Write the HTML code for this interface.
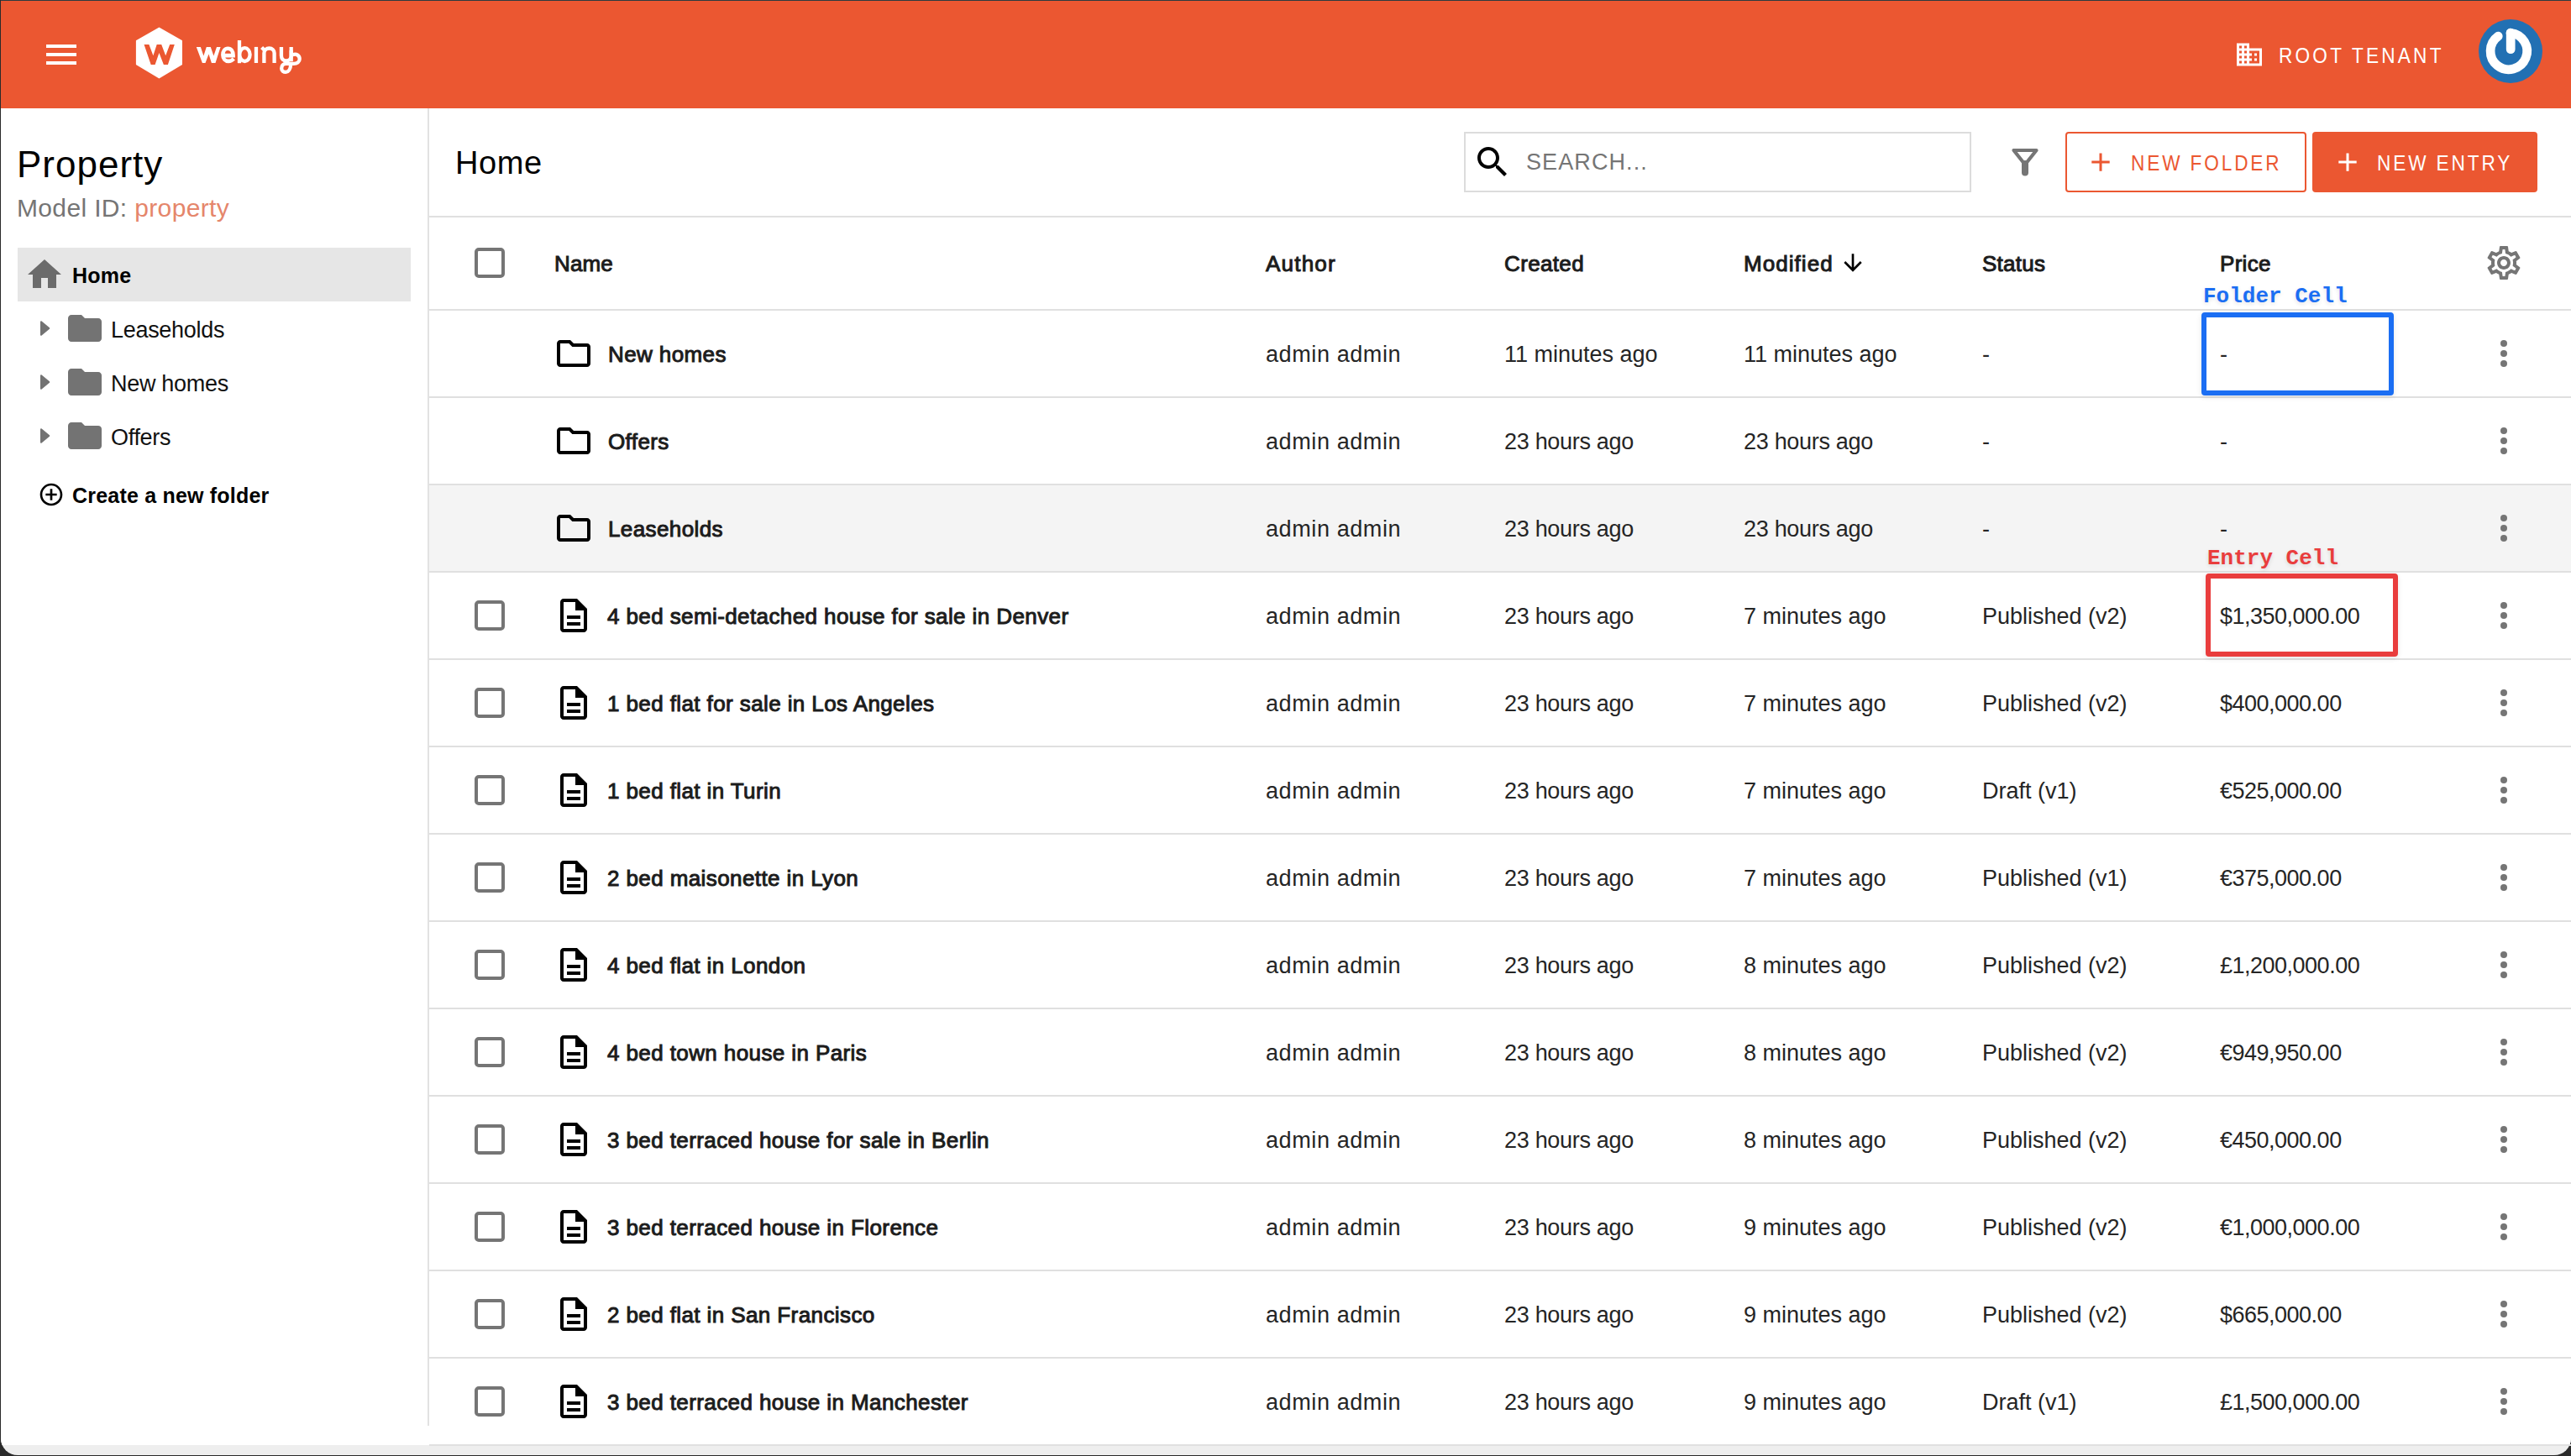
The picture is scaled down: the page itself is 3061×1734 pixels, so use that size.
<!DOCTYPE html>
<html><head><meta charset="utf-8"><title>Webiny - Property</title>
<style>
html,body{margin:0;padding:0;width:3061px;height:1734px;overflow:hidden;background:#2a2a2a}
.r{position:absolute;display:block}
.t{position:absolute;white-space:pre;line-height:1;font-family:"Liberation Sans",sans-serif;color:#252525}
.b{font-weight:bold}
.n{letter-spacing:0.4px;color:#1c1c1c;-webkit-text-stroke:1px #1c1c1c}
.h{color:#1c1c1c;-webkit-text-stroke:1px #1c1c1c}
.sx{transform:scaleX(0.87);transform-origin:0 0}
.hdr{color:#fff;letter-spacing:3.7px}
.btn{letter-spacing:3.3px}
.mono{font-family:"Liberation Mono",monospace;font-weight:bold;text-shadow:0 2px 5px rgba(0,0,0,.12)}
</style></head><body>
<div class="r" style="left:0px;top:0px;width:3061px;height:1734px;background:#2a2a2a"></div>
<div class="r" style="left:1px;top:1px;width:3060px;height:1732px;background:#eeeeee;border-radius:0 0 20px 20px;overflow:hidden"><div class="r" style="left:0;top:0;width:3060px;height:1720px;background:#fff"></div></div>
<div class="r" style="left:1px;top:0px;width:3060px;height:1px;background:#2c3b3f"></div>
<div class="r" style="left:1px;top:1px;width:3060px;height:128px;background:#EB5731"></div>
<div class="r" style="left:55px;top:53px;width:36px;height:4px;background:#fff"></div>
<div class="r" style="left:55px;top:63px;width:36px;height:4px;background:#fff"></div>
<div class="r" style="left:55px;top:73px;width:36px;height:4px;background:#fff"></div>
<svg class="r" style="left:158px;top:28px;" width="64" height="70" viewBox="158 28 64 70"><path d="M189.45 33.4 L216.2 48.7 L216.2 76.6 L189.45 92.6 L162.7 76.6 L162.7 48.7 Z" fill="#fff" stroke="#fff" stroke-width="1.6" stroke-linejoin="round"/><path d="M171.55 53.1 L177.4 53.1 L182.4 66.2 L186.7 53.1 L192.2 53.1 L197.2 66.2 L202.2 53.1 L207.8 53.1 L199.9 76.9 L194.9 76.9 L189.45 63.1 L184.6 76.9 L179.7 76.9 Z" fill="#EB5731"/></svg>
<svg class="r" style="left:228px;top:44px;" width="136" height="48" viewBox="228 44 136 48"><path d="M233.8 56 L238.9 56 L242.4 66.4 L245.8 56 L250.8 56 L254.4 66.4 L258 56 L262.6 56 L256.5 75 L251.9 75 L248.5 64.6 L244.5 75 L240.9 75 Z" fill="#fff"/><g fill="none" stroke="#fff" stroke-width="4.6" stroke-linecap="butt" stroke-linejoin="miter"><path d="M265.6 66.1 H277.6 C277.6 60.6 275 57.7 271.4 57.7 C267.6 57.7 265.4 61.2 265.4 65.4 C265.4 70.2 268.3 72.9 272 72.9 C274.6 72.9 276.6 71.8 278.3 70"/></g><g fill="none" stroke="#fff" stroke-width="4.3" stroke-linecap="butt" stroke-linejoin="miter"><path d="M285 48 V75.2"/><ellipse cx="291.4" cy="65.1" rx="6.2" ry="7.9"/><path d="M304.95 55.9 V75"/><path d="M314.4 75 V63.2 C314.4 59.6 317 57.5 320.5 57.5 C324 57.5 326.6 59.6 326.6 63.2 V75"/><path d="M311.6 56.6 L314.6 59.6"/><path d="M334.95 56 V66.2 C334.95 70.4 337.6 72.3 340.8 72.3 C344 72.3 346.7 70.4 346.7 66.2 V56"/><path d="M346.7 60 V73.2"/><path d="M348.6 65.2 C353.2 63.6 356.7 66.3 356.7 70.3 C356.7 73.6 353.8 75.8 349.6 75.8 H340.6 C337 75.8 335.2 78.4 335.2 81.4 C335.2 84.4 337.5 85.8 340.2 85.8 C343.6 85.8 345.9 82 346.2 76.5"/></g></svg>
<svg class="r" style="left:2660px;top:46.7px;" width="36" height="36" viewBox="0 0 24 24"><path fill-rule="nonzero" d="M12 7V3H2v18h20V7H12zM6 19H4v-2h2v2zm0-4H4v-2h2v2zm0-4H4V9h2v2zm0-4H4V5h2v2zm4 12H8v-2h2v2zm0-4H8v-2h2v2zm0-4H8V9h2v2zm0-4H8V5h2v2zm10 12h-8v-2h2v-2h-2v-2h2v-2h-2V9h8v10zm-2-8h-2v2h2v-2zm0 4h-2v2h2v-2z" fill="#fff"/></svg>
<div class="t hdr sx" style="left:2713px;top:53px;font-size:26px;">ROOT TENANT</div>
<svg class="r" style="left:2948px;top:20px;" width="82" height="82" viewBox="2948 20 82 82"><circle cx="2989" cy="61" r="38" fill="#2270B3"/><path d="M2989 39.2 A21.8 21.8 0 1 1 2974.3 43.1" fill="none" stroke="#fff" stroke-width="10.7" stroke-linecap="round"/><path d="M2989.2 39.2 V58.7" fill="none" stroke="#fff" stroke-width="10.7" stroke-linecap="round"/></svg>
<div class="t " style="left:20px;top:174px;font-size:44px;color:#000;letter-spacing:1.0px">Property</div>
<div class="t " style="left:20px;top:233px;font-size:30px;color:#757575;letter-spacing:0.35px">Model ID: <span style="color:#E5866B">property</span></div>
<div class="r" style="left:21px;top:295px;width:468px;height:64px;background:#e6e6e6"></div>
<svg class="r" style="left:29px;top:303px;" width="48" height="48" viewBox="0 0 24 24"><path d="M10 20v-6h4v6h5v-8h3L12 3 2 12h3v8z" fill="#6b6b6b"/></svg>
<div class="t b" style="left:86px;top:316px;font-size:25px;color:#000;letter-spacing:0.2px">Home</div>
<svg class="r" style="left:46px;top:381px;" width="16" height="20" viewBox="0 0 16 20"><path d="M3 2.2 L12.3 10 L3 17.8 Z" fill="#737373" stroke="#737373" stroke-width="2" stroke-linejoin="round"/></svg>
<svg class="r" style="left:77px;top:367px;" width="48" height="48" viewBox="0 0 24 24"><path d="M10 4H4c-1.1 0-1.99.9-1.99 2L2 18c0 1.1.9 2 2 2h16c1.1 0 2-.9 2-2V8c0-1.1-.9-2-2-2h-8l-2-2z" fill="#737373"/></svg>
<div class="t " style="left:132px;top:380px;font-size:27px;color:#111;letter-spacing:-0.3px">Leaseholds</div>
<svg class="r" style="left:46px;top:445px;" width="16" height="20" viewBox="0 0 16 20"><path d="M3 2.2 L12.3 10 L3 17.8 Z" fill="#737373" stroke="#737373" stroke-width="2" stroke-linejoin="round"/></svg>
<svg class="r" style="left:77px;top:431px;" width="48" height="48" viewBox="0 0 24 24"><path d="M10 4H4c-1.1 0-1.99.9-1.99 2L2 18c0 1.1.9 2 2 2h16c1.1 0 2-.9 2-2V8c0-1.1-.9-2-2-2h-8l-2-2z" fill="#737373"/></svg>
<div class="t " style="left:132px;top:444px;font-size:27px;color:#111;letter-spacing:-0.3px">New homes</div>
<svg class="r" style="left:46px;top:509px;" width="16" height="20" viewBox="0 0 16 20"><path d="M3 2.2 L12.3 10 L3 17.8 Z" fill="#737373" stroke="#737373" stroke-width="2" stroke-linejoin="round"/></svg>
<svg class="r" style="left:77px;top:495px;" width="48" height="48" viewBox="0 0 24 24"><path d="M10 4H4c-1.1 0-1.99.9-1.99 2L2 18c0 1.1.9 2 2 2h16c1.1 0 2-.9 2-2V8c0-1.1-.9-2-2-2h-8l-2-2z" fill="#737373"/></svg>
<div class="t " style="left:132px;top:508px;font-size:27px;color:#111;letter-spacing:-0.3px">Offers</div>
<svg class="r" style="left:45px;top:573px;" width="32" height="32" viewBox="0 0 24 24"><path d="M13 7h-2v4H7v2h4v4h2v-4h4v-2h-4V7zm-1-5C6.48 2 2 6.48 2 12s4.48 10 10 10 10-4.48 10-10S17.52 2 12 2zm0 18c-4.41 0-8-3.59-8-8s3.59-8 8-8 8 3.59 8 8-3.59 8-8 8z" fill="#000"/></svg>
<div class="t b" style="left:86px;top:578px;font-size:25px;color:#000;letter-spacing:0.2px">Create a new folder</div>
<div class="r" style="left:509px;top:129px;width:2px;height:1569px;background:#e2e2e2"></div>
<div class="t " style="left:542px;top:175px;font-size:38px;color:#000;letter-spacing:0.6px">Home</div>
<div class="r" style="left:1743px;top:157px;width:604px;height:72px;border:2px solid #dcdcdc;box-sizing:border-box;background:#fff"></div>
<svg class="r" style="left:1753px;top:169px;" width="48" height="48" viewBox="0 0 24 24"><path d="M15.5 14h-.79l-.28-.27C15.41 12.59 16 11.11 16 9.5 16 5.91 13.09 3 9.5 3S3 5.91 3 9.5 5.91 16 9.5 16c1.61 0 3.09-.59 4.23-1.57l.27.28v.79l5 4.99L20.49 19l-4.99-5zm-6 0C7.01 14 5 11.99 5 9.5S7.01 5 9.5 5 14 7.01 14 9.5 11.99 14 9.5 14z" fill="#000"/></svg>
<div class="t " style="left:1817px;top:180px;font-size:27px;color:#757575;letter-spacing:1.1px">SEARCH...</div>
<svg class="r" style="left:2390px;top:172px;" width="42" height="42" viewBox="2390 172 42 42"><path d="M2397.5 179 H2424.5 L2411 196 Z" fill="none" stroke="#757575" stroke-width="4.2" stroke-linejoin="round"/><path d="M2411 195 V205.5" fill="none" stroke="#757575" stroke-width="8" stroke-linecap="round"/></svg>
<div class="r" style="left:2459px;top:157px;width:287px;height:72px;border:2px solid #EB5731;border-radius:4px;box-sizing:border-box"></div>
<svg class="r" style="left:2488px;top:180px;" width="26" height="26" viewBox="0 0 26 26"><path d="M13 2.4 V23.8 M2.3 13.1 H23.7" stroke="#EB5731" stroke-width="3"/></svg>
<div class="t btn sx" style="left:2537px;top:181px;font-size:26px;color:#EB5731">NEW FOLDER</div>
<div class="r" style="left:2753px;top:157px;width:268px;height:72px;background:#EB5731;border-radius:4px"></div>
<svg class="r" style="left:2782px;top:180px;" width="26" height="26" viewBox="0 0 26 26"><path d="M13 2.4 V23.8 M2.3 13.1 H23.7" stroke="#fff" stroke-width="3"/></svg>
<div class="t btn sx" style="left:2830px;top:181px;font-size:26px;color:#fff">NEW ENTRY</div>
<div class="r" style="left:511px;top:257px;width:2550px;height:2px;background:#e0e0e0"></div>
<div class="r" style="left:565px;top:295px;width:36px;height:36px;border:4px solid #757575;border-radius:5px;box-sizing:border-box"></div>
<div class="t h" style="left:660px;top:301px;font-size:26px;letter-spacing:0.1px">Name</div>
<div class="t h" style="left:1507px;top:301px;font-size:26px;letter-spacing:1.2px">Author</div>
<div class="t h" style="left:1791px;top:301px;font-size:26px;letter-spacing:0.35px">Created</div>
<div class="t h" style="left:2076px;top:301px;font-size:26px;letter-spacing:1.05px">Modified</div>
<div class="t h" style="left:2360px;top:301px;font-size:26px;letter-spacing:0.26px">Status</div>
<div class="t h" style="left:2643px;top:301px;font-size:26px;letter-spacing:0.3px">Price</div>
<svg class="r" style="left:2190px;top:297px;" width="32" height="32" viewBox="0 0 24 24"><path d="M20 12l-1.41-1.41L13 16.17V4h-2v12.17l-5.58-5.59L4 12l8 8 8-8z" fill="#000"/></svg>
<svg class="r" style="left:2957px;top:289px;" width="48" height="48" viewBox="0 0 24 24"><path d="M19.43 12.98c.04-.32.07-.64.07-.98 0-.34-.03-.66-.07-.98l2.11-1.65c.19-.15.24-.42.12-.64l-2-3.46c-.09-.16-.26-.25-.44-.25-.06 0-.12.01-.17.03l-2.49 1c-.52-.4-1.08-.73-1.69-.98l-.38-2.65C14.46 2.18 14.25 2 14 2h-4c-.25 0-.46.18-.49.42l-.38 2.65c-.61.25-1.17.59-1.69.98l-2.49-1c-.06-.02-.12-.03-.18-.03-.17 0-.34.09-.43.25l-2 3.46c-.13.22-.07.49.12.64l2.11 1.650c-.04.32-.07.65-.07.98 0 .33.03.66.07.98l-2.11 1.65c-.19.15-.24.42-.12.64l2 3.46c.09.16.26.25.44.25.06 0 .12-.01.17-.03l2.49-1c.52.4 1.08.73 1.69.98l.38 2.65c.03.24.24.42.49.42h4c.25 0 .46-.18.49-.42l.38-2.65c.61-.25 1.17-.59 1.69-.98l2.49 1c.06.02.12.03.18.03.17 0 .34-.09.43-.25l2-3.46c.12-.22.07-.49-.12-.64l-2.11-1.65zm-1.98-1.710c.04.31.05.52.05.73 0 .21-.02.43-.05.73l-.14 1.13.89.7 1.08.84-.7 1.21-1.27-.51-1.04-.42-.9.68c-.43.32-.84.56-1.25.73l-1.06.43-.16 1.13-.2 1.35h-1.4l-.19-1.35-.16-1.13-1.06-.43c-.43-.18-.83-.41-1.230-.71l-.91-.7-1.06.43-1.27.51-.7-1.21 1.08-.84.89-.7-.14-1.13c-.03-.31-.05-.54-.05-.74s.02-.43.05-.73l.14-1.13-.89-.7-1.08-.84.7-1.21 1.27.51 1.04.42.9-.68c.43-.32.84-.56 1.25-.73l1.06-.43.16-1.13.2-1.35h1.39l.19 1.35.16 1.13 1.06.43c.43.18.83.41 1.23.71l.91.7 1.06-.43 1.27-.51.7 1.21-1.07.85-.89.7.14 1.13zM12 8c-2.21 0-4 1.79-4 4s1.79 4 4 4 4-1.79 4-4-1.79-4-4-4zm0 6c-1.1 0-2-.9-2-2s.9-2 2-2 2 .9 2 2-.9 2-2 2z" fill="#757575"/></svg>
<div class="r" style="left:511px;top:368px;width:2550px;height:2px;background:#e0e0e0"></div>
<div class="r" style="left:511px;top:472px;width:2550px;height:2px;background:#e0e0e0"></div>
<svg class="r" style="left:659px;top:397px;" width="48" height="48" viewBox="0 0 24 24"><path d="M9.17 6l2 2H20v10H4V6h5.17M10 4H4c-1.1 0-1.99.9-1.99 2L2 18c0 1.1.9 2 2 2h16c1.1 0 2-.9 2-2V8c0-1.1-.9-2-2-2h-8l-2-2z" fill="#000"/></svg>
<div class="t n" style="left:724px;top:409px;font-size:26px;">New homes</div>
<div class="t " style="left:1507px;top:409px;font-size:27px;letter-spacing:0.6px">admin admin</div>
<div class="t " style="left:1791px;top:409px;font-size:27px;">11 minutes ago</div>
<div class="t " style="left:2076px;top:409px;font-size:27px;">11 minutes ago</div>
<div class="t " style="left:2360px;top:409px;font-size:27px;">-</div>
<div class="t " style="left:2643px;top:409px;font-size:27px;letter-spacing:-0.5px">-</div>
<div class="r" style="left:2977px;top:405px;width:8px;height:8px;background:#757575;border-radius:50%"></div>
<div class="r" style="left:2977px;top:417px;width:8px;height:8px;background:#757575;border-radius:50%"></div>
<div class="r" style="left:2977px;top:429px;width:8px;height:8px;background:#757575;border-radius:50%"></div>
<div class="r" style="left:511px;top:576px;width:2550px;height:2px;background:#e0e0e0"></div>
<svg class="r" style="left:659px;top:501px;" width="48" height="48" viewBox="0 0 24 24"><path d="M9.17 6l2 2H20v10H4V6h5.17M10 4H4c-1.1 0-1.99.9-1.99 2L2 18c0 1.1.9 2 2 2h16c1.1 0 2-.9 2-2V8c0-1.1-.9-2-2-2h-8l-2-2z" fill="#000"/></svg>
<div class="t n" style="left:724px;top:513px;font-size:26px;">Offers</div>
<div class="t " style="left:1507px;top:513px;font-size:27px;letter-spacing:0.6px">admin admin</div>
<div class="t " style="left:1791px;top:513px;font-size:27px;letter-spacing:-0.3px">23 hours ago</div>
<div class="t " style="left:2076px;top:513px;font-size:27px;letter-spacing:-0.3px">23 hours ago</div>
<div class="t " style="left:2360px;top:513px;font-size:27px;">-</div>
<div class="t " style="left:2643px;top:513px;font-size:27px;letter-spacing:-0.5px">-</div>
<div class="r" style="left:2977px;top:509px;width:8px;height:8px;background:#757575;border-radius:50%"></div>
<div class="r" style="left:2977px;top:521px;width:8px;height:8px;background:#757575;border-radius:50%"></div>
<div class="r" style="left:2977px;top:533px;width:8px;height:8px;background:#757575;border-radius:50%"></div>
<div class="r" style="left:511px;top:578px;width:2550px;height:102px;background:#f4f4f4"></div>
<div class="r" style="left:511px;top:680px;width:2550px;height:2px;background:#e0e0e0"></div>
<svg class="r" style="left:659px;top:605px;" width="48" height="48" viewBox="0 0 24 24"><path d="M9.17 6l2 2H20v10H4V6h5.17M10 4H4c-1.1 0-1.99.9-1.99 2L2 18c0 1.1.9 2 2 2h16c1.1 0 2-.9 2-2V8c0-1.1-.9-2-2-2h-8l-2-2z" fill="#000"/></svg>
<div class="t n" style="left:724px;top:617px;font-size:26px;">Leaseholds</div>
<div class="t " style="left:1507px;top:617px;font-size:27px;letter-spacing:0.6px">admin admin</div>
<div class="t " style="left:1791px;top:617px;font-size:27px;letter-spacing:-0.3px">23 hours ago</div>
<div class="t " style="left:2076px;top:617px;font-size:27px;letter-spacing:-0.3px">23 hours ago</div>
<div class="t " style="left:2360px;top:617px;font-size:27px;">-</div>
<div class="t " style="left:2643px;top:617px;font-size:27px;letter-spacing:-0.5px">-</div>
<div class="r" style="left:2977px;top:613px;width:8px;height:8px;background:#757575;border-radius:50%"></div>
<div class="r" style="left:2977px;top:625px;width:8px;height:8px;background:#757575;border-radius:50%"></div>
<div class="r" style="left:2977px;top:637px;width:8px;height:8px;background:#757575;border-radius:50%"></div>
<div class="r" style="left:511px;top:784px;width:2550px;height:2px;background:#e0e0e0"></div>
<div class="r" style="left:565px;top:715px;width:36px;height:36px;border:4px solid #757575;border-radius:5px;box-sizing:border-box"></div>
<svg class="r" style="left:659px;top:709px;" width="48" height="48" viewBox="0 0 24 24"><path d="M8 16h8v2H8zm0-4h8v2H8zm6-10H6c-1.1 0-2 .9-2 2v16c0 1.1.89 2 1.99 2H18c1.1 0 2-.9 2-2V8l-6-6zm4 18H6V4h7v5h5v11z" fill="#000"/></svg>
<div class="t n" style="left:723px;top:721px;font-size:26px;">4 bed semi-detached house for sale in Denver</div>
<div class="t " style="left:1507px;top:721px;font-size:27px;letter-spacing:0.6px">admin admin</div>
<div class="t " style="left:1791px;top:721px;font-size:27px;letter-spacing:-0.3px">23 hours ago</div>
<div class="t " style="left:2076px;top:721px;font-size:27px;">7 minutes ago</div>
<div class="t " style="left:2360px;top:721px;font-size:27px;">Published (v2)</div>
<div class="t " style="left:2643px;top:721px;font-size:27px;letter-spacing:-0.5px">$1,350,000.00</div>
<div class="r" style="left:2977px;top:717px;width:8px;height:8px;background:#757575;border-radius:50%"></div>
<div class="r" style="left:2977px;top:729px;width:8px;height:8px;background:#757575;border-radius:50%"></div>
<div class="r" style="left:2977px;top:741px;width:8px;height:8px;background:#757575;border-radius:50%"></div>
<div class="r" style="left:511px;top:888px;width:2550px;height:2px;background:#e0e0e0"></div>
<div class="r" style="left:565px;top:819px;width:36px;height:36px;border:4px solid #757575;border-radius:5px;box-sizing:border-box"></div>
<svg class="r" style="left:659px;top:813px;" width="48" height="48" viewBox="0 0 24 24"><path d="M8 16h8v2H8zm0-4h8v2H8zm6-10H6c-1.1 0-2 .9-2 2v16c0 1.1.89 2 1.99 2H18c1.1 0 2-.9 2-2V8l-6-6zm4 18H6V4h7v5h5v11z" fill="#000"/></svg>
<div class="t n" style="left:723px;top:825px;font-size:26px;">1 bed flat for sale in Los Angeles</div>
<div class="t " style="left:1507px;top:825px;font-size:27px;letter-spacing:0.6px">admin admin</div>
<div class="t " style="left:1791px;top:825px;font-size:27px;letter-spacing:-0.3px">23 hours ago</div>
<div class="t " style="left:2076px;top:825px;font-size:27px;">7 minutes ago</div>
<div class="t " style="left:2360px;top:825px;font-size:27px;">Published (v2)</div>
<div class="t " style="left:2643px;top:825px;font-size:27px;letter-spacing:-0.5px">$400,000.00</div>
<div class="r" style="left:2977px;top:821px;width:8px;height:8px;background:#757575;border-radius:50%"></div>
<div class="r" style="left:2977px;top:833px;width:8px;height:8px;background:#757575;border-radius:50%"></div>
<div class="r" style="left:2977px;top:845px;width:8px;height:8px;background:#757575;border-radius:50%"></div>
<div class="r" style="left:511px;top:992px;width:2550px;height:2px;background:#e0e0e0"></div>
<div class="r" style="left:565px;top:923px;width:36px;height:36px;border:4px solid #757575;border-radius:5px;box-sizing:border-box"></div>
<svg class="r" style="left:659px;top:917px;" width="48" height="48" viewBox="0 0 24 24"><path d="M8 16h8v2H8zm0-4h8v2H8zm6-10H6c-1.1 0-2 .9-2 2v16c0 1.1.89 2 1.99 2H18c1.1 0 2-.9 2-2V8l-6-6zm4 18H6V4h7v5h5v11z" fill="#000"/></svg>
<div class="t n" style="left:723px;top:929px;font-size:26px;">1 bed flat in Turin</div>
<div class="t " style="left:1507px;top:929px;font-size:27px;letter-spacing:0.6px">admin admin</div>
<div class="t " style="left:1791px;top:929px;font-size:27px;letter-spacing:-0.3px">23 hours ago</div>
<div class="t " style="left:2076px;top:929px;font-size:27px;">7 minutes ago</div>
<div class="t " style="left:2360px;top:929px;font-size:27px;">Draft (v1)</div>
<div class="t " style="left:2643px;top:929px;font-size:27px;letter-spacing:-0.5px">€525,000.00</div>
<div class="r" style="left:2977px;top:925px;width:8px;height:8px;background:#757575;border-radius:50%"></div>
<div class="r" style="left:2977px;top:937px;width:8px;height:8px;background:#757575;border-radius:50%"></div>
<div class="r" style="left:2977px;top:949px;width:8px;height:8px;background:#757575;border-radius:50%"></div>
<div class="r" style="left:511px;top:1096px;width:2550px;height:2px;background:#e0e0e0"></div>
<div class="r" style="left:565px;top:1027px;width:36px;height:36px;border:4px solid #757575;border-radius:5px;box-sizing:border-box"></div>
<svg class="r" style="left:659px;top:1021px;" width="48" height="48" viewBox="0 0 24 24"><path d="M8 16h8v2H8zm0-4h8v2H8zm6-10H6c-1.1 0-2 .9-2 2v16c0 1.1.89 2 1.99 2H18c1.1 0 2-.9 2-2V8l-6-6zm4 18H6V4h7v5h5v11z" fill="#000"/></svg>
<div class="t n" style="left:723px;top:1033px;font-size:26px;">2 bed maisonette in Lyon</div>
<div class="t " style="left:1507px;top:1033px;font-size:27px;letter-spacing:0.6px">admin admin</div>
<div class="t " style="left:1791px;top:1033px;font-size:27px;letter-spacing:-0.3px">23 hours ago</div>
<div class="t " style="left:2076px;top:1033px;font-size:27px;">7 minutes ago</div>
<div class="t " style="left:2360px;top:1033px;font-size:27px;">Published (v1)</div>
<div class="t " style="left:2643px;top:1033px;font-size:27px;letter-spacing:-0.5px">€375,000.00</div>
<div class="r" style="left:2977px;top:1029px;width:8px;height:8px;background:#757575;border-radius:50%"></div>
<div class="r" style="left:2977px;top:1041px;width:8px;height:8px;background:#757575;border-radius:50%"></div>
<div class="r" style="left:2977px;top:1053px;width:8px;height:8px;background:#757575;border-radius:50%"></div>
<div class="r" style="left:511px;top:1200px;width:2550px;height:2px;background:#e0e0e0"></div>
<div class="r" style="left:565px;top:1131px;width:36px;height:36px;border:4px solid #757575;border-radius:5px;box-sizing:border-box"></div>
<svg class="r" style="left:659px;top:1125px;" width="48" height="48" viewBox="0 0 24 24"><path d="M8 16h8v2H8zm0-4h8v2H8zm6-10H6c-1.1 0-2 .9-2 2v16c0 1.1.89 2 1.99 2H18c1.1 0 2-.9 2-2V8l-6-6zm4 18H6V4h7v5h5v11z" fill="#000"/></svg>
<div class="t n" style="left:723px;top:1137px;font-size:26px;">4 bed flat in London</div>
<div class="t " style="left:1507px;top:1137px;font-size:27px;letter-spacing:0.6px">admin admin</div>
<div class="t " style="left:1791px;top:1137px;font-size:27px;letter-spacing:-0.3px">23 hours ago</div>
<div class="t " style="left:2076px;top:1137px;font-size:27px;">8 minutes ago</div>
<div class="t " style="left:2360px;top:1137px;font-size:27px;">Published (v2)</div>
<div class="t " style="left:2643px;top:1137px;font-size:27px;letter-spacing:-0.5px">£1,200,000.00</div>
<div class="r" style="left:2977px;top:1133px;width:8px;height:8px;background:#757575;border-radius:50%"></div>
<div class="r" style="left:2977px;top:1145px;width:8px;height:8px;background:#757575;border-radius:50%"></div>
<div class="r" style="left:2977px;top:1157px;width:8px;height:8px;background:#757575;border-radius:50%"></div>
<div class="r" style="left:511px;top:1304px;width:2550px;height:2px;background:#e0e0e0"></div>
<div class="r" style="left:565px;top:1235px;width:36px;height:36px;border:4px solid #757575;border-radius:5px;box-sizing:border-box"></div>
<svg class="r" style="left:659px;top:1229px;" width="48" height="48" viewBox="0 0 24 24"><path d="M8 16h8v2H8zm0-4h8v2H8zm6-10H6c-1.1 0-2 .9-2 2v16c0 1.1.89 2 1.99 2H18c1.1 0 2-.9 2-2V8l-6-6zm4 18H6V4h7v5h5v11z" fill="#000"/></svg>
<div class="t n" style="left:723px;top:1241px;font-size:26px;">4 bed town house in Paris</div>
<div class="t " style="left:1507px;top:1241px;font-size:27px;letter-spacing:0.6px">admin admin</div>
<div class="t " style="left:1791px;top:1241px;font-size:27px;letter-spacing:-0.3px">23 hours ago</div>
<div class="t " style="left:2076px;top:1241px;font-size:27px;">8 minutes ago</div>
<div class="t " style="left:2360px;top:1241px;font-size:27px;">Published (v2)</div>
<div class="t " style="left:2643px;top:1241px;font-size:27px;letter-spacing:-0.5px">€949,950.00</div>
<div class="r" style="left:2977px;top:1237px;width:8px;height:8px;background:#757575;border-radius:50%"></div>
<div class="r" style="left:2977px;top:1249px;width:8px;height:8px;background:#757575;border-radius:50%"></div>
<div class="r" style="left:2977px;top:1261px;width:8px;height:8px;background:#757575;border-radius:50%"></div>
<div class="r" style="left:511px;top:1408px;width:2550px;height:2px;background:#e0e0e0"></div>
<div class="r" style="left:565px;top:1339px;width:36px;height:36px;border:4px solid #757575;border-radius:5px;box-sizing:border-box"></div>
<svg class="r" style="left:659px;top:1333px;" width="48" height="48" viewBox="0 0 24 24"><path d="M8 16h8v2H8zm0-4h8v2H8zm6-10H6c-1.1 0-2 .9-2 2v16c0 1.1.89 2 1.99 2H18c1.1 0 2-.9 2-2V8l-6-6zm4 18H6V4h7v5h5v11z" fill="#000"/></svg>
<div class="t n" style="left:723px;top:1345px;font-size:26px;">3 bed terraced house for sale in Berlin</div>
<div class="t " style="left:1507px;top:1345px;font-size:27px;letter-spacing:0.6px">admin admin</div>
<div class="t " style="left:1791px;top:1345px;font-size:27px;letter-spacing:-0.3px">23 hours ago</div>
<div class="t " style="left:2076px;top:1345px;font-size:27px;">8 minutes ago</div>
<div class="t " style="left:2360px;top:1345px;font-size:27px;">Published (v2)</div>
<div class="t " style="left:2643px;top:1345px;font-size:27px;letter-spacing:-0.5px">€450,000.00</div>
<div class="r" style="left:2977px;top:1341px;width:8px;height:8px;background:#757575;border-radius:50%"></div>
<div class="r" style="left:2977px;top:1353px;width:8px;height:8px;background:#757575;border-radius:50%"></div>
<div class="r" style="left:2977px;top:1365px;width:8px;height:8px;background:#757575;border-radius:50%"></div>
<div class="r" style="left:511px;top:1512px;width:2550px;height:2px;background:#e0e0e0"></div>
<div class="r" style="left:565px;top:1443px;width:36px;height:36px;border:4px solid #757575;border-radius:5px;box-sizing:border-box"></div>
<svg class="r" style="left:659px;top:1437px;" width="48" height="48" viewBox="0 0 24 24"><path d="M8 16h8v2H8zm0-4h8v2H8zm6-10H6c-1.1 0-2 .9-2 2v16c0 1.1.89 2 1.99 2H18c1.1 0 2-.9 2-2V8l-6-6zm4 18H6V4h7v5h5v11z" fill="#000"/></svg>
<div class="t n" style="left:723px;top:1449px;font-size:26px;">3 bed terraced house in Florence</div>
<div class="t " style="left:1507px;top:1449px;font-size:27px;letter-spacing:0.6px">admin admin</div>
<div class="t " style="left:1791px;top:1449px;font-size:27px;letter-spacing:-0.3px">23 hours ago</div>
<div class="t " style="left:2076px;top:1449px;font-size:27px;">9 minutes ago</div>
<div class="t " style="left:2360px;top:1449px;font-size:27px;">Published (v2)</div>
<div class="t " style="left:2643px;top:1449px;font-size:27px;letter-spacing:-0.5px">€1,000,000.00</div>
<div class="r" style="left:2977px;top:1445px;width:8px;height:8px;background:#757575;border-radius:50%"></div>
<div class="r" style="left:2977px;top:1457px;width:8px;height:8px;background:#757575;border-radius:50%"></div>
<div class="r" style="left:2977px;top:1469px;width:8px;height:8px;background:#757575;border-radius:50%"></div>
<div class="r" style="left:511px;top:1616px;width:2550px;height:2px;background:#e0e0e0"></div>
<div class="r" style="left:565px;top:1547px;width:36px;height:36px;border:4px solid #757575;border-radius:5px;box-sizing:border-box"></div>
<svg class="r" style="left:659px;top:1541px;" width="48" height="48" viewBox="0 0 24 24"><path d="M8 16h8v2H8zm0-4h8v2H8zm6-10H6c-1.1 0-2 .9-2 2v16c0 1.1.89 2 1.99 2H18c1.1 0 2-.9 2-2V8l-6-6zm4 18H6V4h7v5h5v11z" fill="#000"/></svg>
<div class="t n" style="left:723px;top:1553px;font-size:26px;">2 bed flat in San Francisco</div>
<div class="t " style="left:1507px;top:1553px;font-size:27px;letter-spacing:0.6px">admin admin</div>
<div class="t " style="left:1791px;top:1553px;font-size:27px;letter-spacing:-0.3px">23 hours ago</div>
<div class="t " style="left:2076px;top:1553px;font-size:27px;">9 minutes ago</div>
<div class="t " style="left:2360px;top:1553px;font-size:27px;">Published (v2)</div>
<div class="t " style="left:2643px;top:1553px;font-size:27px;letter-spacing:-0.5px">$665,000.00</div>
<div class="r" style="left:2977px;top:1549px;width:8px;height:8px;background:#757575;border-radius:50%"></div>
<div class="r" style="left:2977px;top:1561px;width:8px;height:8px;background:#757575;border-radius:50%"></div>
<div class="r" style="left:2977px;top:1573px;width:8px;height:8px;background:#757575;border-radius:50%"></div>
<div class="r" style="left:511px;top:1720px;width:2550px;height:2px;background:#e0e0e0"></div>
<div class="r" style="left:565px;top:1651px;width:36px;height:36px;border:4px solid #757575;border-radius:5px;box-sizing:border-box"></div>
<svg class="r" style="left:659px;top:1645px;" width="48" height="48" viewBox="0 0 24 24"><path d="M8 16h8v2H8zm0-4h8v2H8zm6-10H6c-1.1 0-2 .9-2 2v16c0 1.1.89 2 1.99 2H18c1.1 0 2-.9 2-2V8l-6-6zm4 18H6V4h7v5h5v11z" fill="#000"/></svg>
<div class="t n" style="left:723px;top:1657px;font-size:26px;">3 bed terraced house in Manchester</div>
<div class="t " style="left:1507px;top:1657px;font-size:27px;letter-spacing:0.6px">admin admin</div>
<div class="t " style="left:1791px;top:1657px;font-size:27px;letter-spacing:-0.3px">23 hours ago</div>
<div class="t " style="left:2076px;top:1657px;font-size:27px;">9 minutes ago</div>
<div class="t " style="left:2360px;top:1657px;font-size:27px;">Draft (v1)</div>
<div class="t " style="left:2643px;top:1657px;font-size:27px;letter-spacing:-0.5px">£1,500,000.00</div>
<div class="r" style="left:2977px;top:1653px;width:8px;height:8px;background:#757575;border-radius:50%"></div>
<div class="r" style="left:2977px;top:1665px;width:8px;height:8px;background:#757575;border-radius:50%"></div>
<div class="r" style="left:2977px;top:1677px;width:8px;height:8px;background:#757575;border-radius:50%"></div>
<div class="t mono" style="left:2623px;top:340px;font-size:26px;color:#1B6EF3">Folder Cell</div>
<div class="r" style="left:2621px;top:372px;width:229px;height:99px;border:6px solid #1B6EF3;border-radius:4px;box-sizing:border-box;box-shadow:0 2px 6px rgba(0,0,0,.10)"></div>
<div class="t mono" style="left:2628px;top:652px;font-size:26px;color:#E93D3D">Entry Cell</div>
<div class="r" style="left:2626px;top:683px;width:229px;height:99px;border:6px solid #E93D3D;border-radius:4px;box-sizing:border-box;box-shadow:0 2px 6px rgba(0,0,0,.10)"></div>
</body></html>
